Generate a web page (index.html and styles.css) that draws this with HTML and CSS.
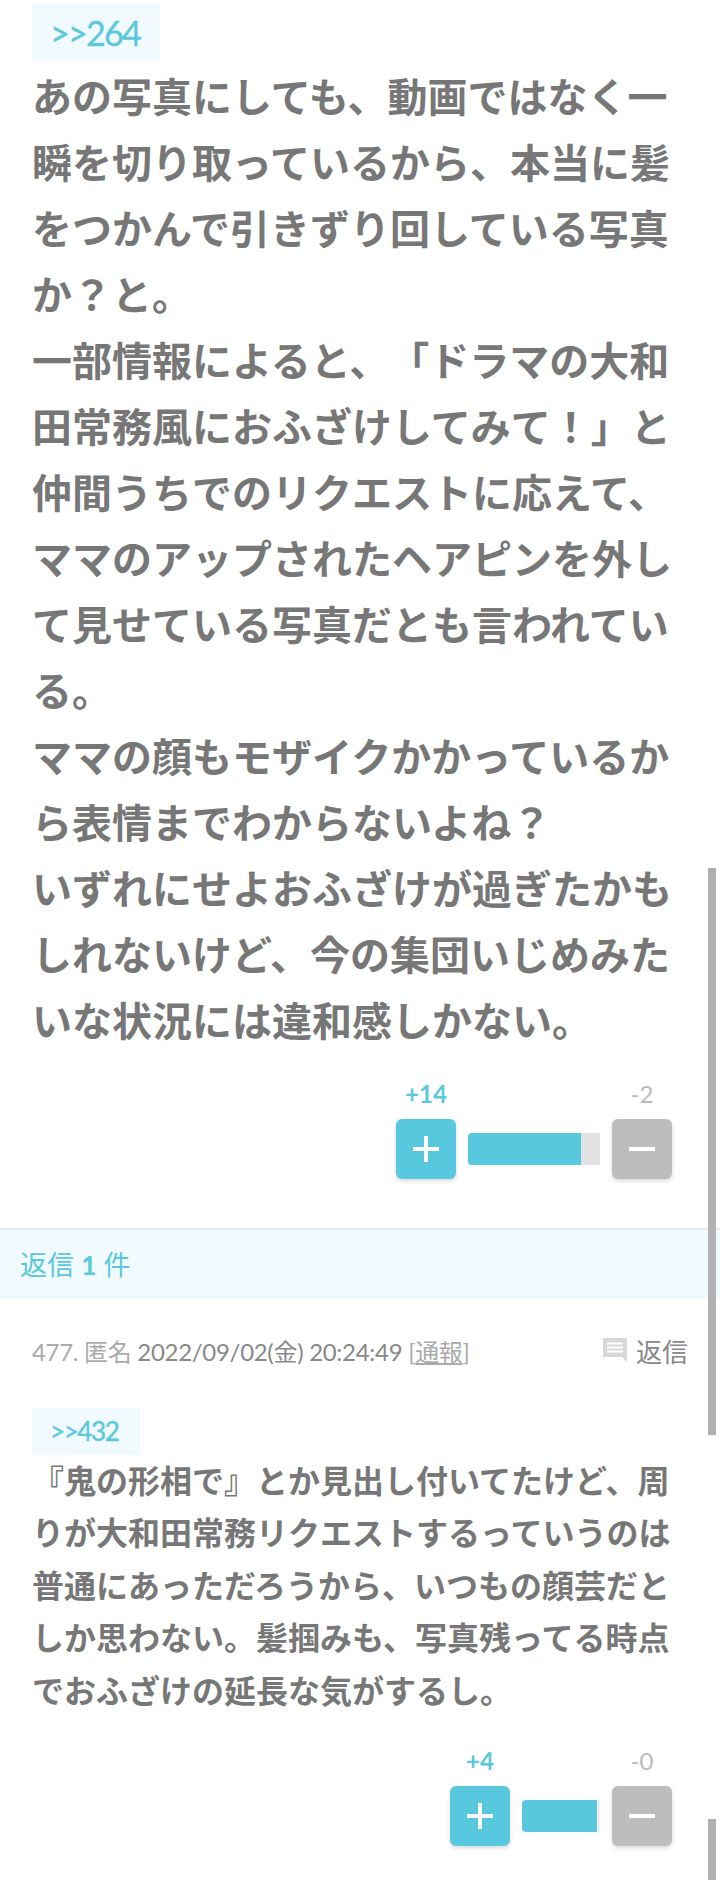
FILE: index.html
```html
<!DOCTYPE html>
<html lang="ja">
<head>
    <meta charset="UTF-8">
    <title>コメント</title>
    <link rel="stylesheet" href="styles.css">
</head>
<body>
    <div class="comment">
        <span class="anchor anchor-big">&gt;&gt;264</span>
        <p class="body-big">あの写真にしても、動画ではなく一瞬を切り取っているから、本当に髪をつかんで引きずり回している写真か？と。<br>一部情報によると、「ドラマの大和田常務風におふざけしてみて！」と仲間うちでのリクエストに応えて、ママのアップされたヘアピンを外して見せている写真だとも言われている。<br>ママの顔もモザイクかかっているから表情までわからないよね？<br>いずれにせよおふざけが過ぎたかもしれないけど、今の集団いじめみたいな状況には違和感しかない。</p>
        <div class="vote vote-first">
            <div class="vote-side">
                <span class="count plus">+14</span>
                <button class="vote-btn btn-plus"><svg width="26" height="26" viewBox="0 0 26 26"><path d="M13 0v26M0 13h26" stroke="#fff" stroke-width="4"/></svg></button>
            </div>
            <div class="bar bar-long"><div class="bar-fill" style="width:85.6%"></div></div>
            <div class="vote-side">
                <span class="count minus">-2</span>
                <button class="vote-btn btn-minus"><svg width="26" height="26" viewBox="0 0 26 26"><path d="M0 13h26" stroke="#fff" stroke-width="4"/></svg></button>
            </div>
        </div>
    </div>

    <div class="reply-head">返信 <b>1</b> 件</div>

    <div class="comment comment-small">
        <div class="meta">
            <div class="meta-left">477. 匿名 <span class="date">2022/09/02(金) 20:24:49</span> <span class="report">[<u>通報</u>]</span></div>
            <div class="reply-link">
                <svg width="26" height="26" viewBox="0 0 26 26"><path d="M1 1h24v24l-5-5H1z" fill="#d8d8d8"/><path d="M5 6.5h16M5 10.5h16M5 14.5h16" stroke="#fff" stroke-width="2"/></svg>
                返信
            </div>
        </div>
        <span class="anchor anchor-small">&gt;&gt;432</span>
        <p class="body-small">『鬼の形相で』とか見出し付いてたけど、周りが大和田常務リクエストするっていうのは普通にあっただろうから、いつもの顔芸だとしか思わない。髪掴みも、写真残ってる時点でおふざけの延長な気がするし。</p>
        <div class="vote vote-second">
            <div class="vote-side">
                <span class="count plus">+4</span>
                <button class="vote-btn btn-plus"><svg width="26" height="26" viewBox="0 0 26 26"><path d="M13 0v26M0 13h26" stroke="#fff" stroke-width="4"/></svg></button>
            </div>
            <div class="bar bar-short"><div class="bar-fill" style="width:96%"></div></div>
            <div class="vote-side">
                <span class="count minus">-0</span>
                <button class="vote-btn btn-minus"><svg width="26" height="26" viewBox="0 0 26 26"><path d="M0 13h26" stroke="#fff" stroke-width="4"/></svg></button>
            </div>
        </div>
    </div>

    <div class="scroll-thumb thumb-one"></div>
    <div class="scroll-thumb thumb-two"></div>
</body>
</html>
```

FILE: styles.css
```css
body {
    margin: 0;
    width: 720px;
    height: 1880px;
    overflow: hidden;
    position: relative;
    background: #fff;
    font-family: Lato, "Noto Sans CJK JP", sans-serif;
    color: #777;
    text-spacing-trim: space-all;
}
p {
    margin: 0;
}
.comment {
    padding: 4px 32px 0;
}
.anchor {
    display: block;
    background: #f1fbff;
    color: #5bc8dc;
    box-sizing: border-box;
    -webkit-text-stroke: 0.4px #5bc8dc;
}
.anchor-big {
    width: 128px;
    font-size: 34px;
    line-height: 58px;
    padding-left: 18px;
    letter-spacing: -1.7px;
}
.anchor-small {
    width: 108px;
    font-size: 26px;
    line-height: 47px;
    padding-left: 18px;
    letter-spacing: -1.4px;
    margin-top: 38px;
}
.body-big {
    font-size: 40px;
    font-weight: 700;
    line-height: 66px;
    margin-top: 2px;
}
.body-small {
    font-size: 32px;
    font-weight: 700;
    line-height: 52.4px;
}
.vote {
    display: flex;
    justify-content: flex-end;
    align-items: flex-end;
    gap: 12px;
    padding-right: 16px;
}
.vote-first {
    margin-top: 25px;
}
.vote-second {
    margin-top: 29px;
}
.vote-side {
    display: flex;
    flex-direction: column;
    align-items: center;
    width: 60px;
}
.count {
    font-size: 24px;
    line-height: 30px;
    margin-bottom: 10px;
}
.plus {
    color: #5bc8dc;
    font-weight: 700;
}
.minus {
    color: #bbb;
}
.vote-btn {
    width: 60px;
    height: 60px;
    border: 0;
    padding: 0;
    border-radius: 6px;
    display: flex;
    align-items: center;
    justify-content: center;
    box-shadow: 0 2px 4px rgba(0, 0, 0, 0.15);
}
.btn-plus {
    background: #57c8dd;
}
.btn-minus {
    background: #bdbdbd;
}
.bar {
    height: 32px;
    margin-bottom: 14px;
    background: #e2e2e2;
    border-radius: 4px 0 0 4px;
    overflow: hidden;
}
.bar-long {
    width: 132px;
}
.bar-short {
    width: 78px;
    background: #f1f1f1;
}
.bar-fill {
    height: 100%;
    background: #57c8dd;
}
.reply-head {
    margin-top: 49px;
    height: 69px;
    line-height: 69px;
    padding-left: 20px;
    font-size: 27px;
    color: #5bc8dc;
    background: #f1fbff;
    border-top: 2px solid #e8e8e8;
}
.comment-small {
    padding-top: 0;
}
.meta {
    display: flex;
    justify-content: space-between;
    align-items: center;
    height: 40px;
    margin-top: 31px;
    font-size: 24px;
    color: #aaa;
}
.meta-left {
    letter-spacing: -0.3px;
}
.date {
    color: #888;
}
.report {
    color: #aaa;
}
.reply-link {
    display: flex;
    align-items: center;
    gap: 8px;
    font-size: 26px;
    color: #888;
}
.scroll-thumb {
    position: absolute;
    left: 708px;
    width: 8px;
    background: #b0b0b0;
}
.thumb-one {
    top: 868px;
    height: 567px;
}
.thumb-two {
    top: 1819px;
    height: 61px;
}
```
